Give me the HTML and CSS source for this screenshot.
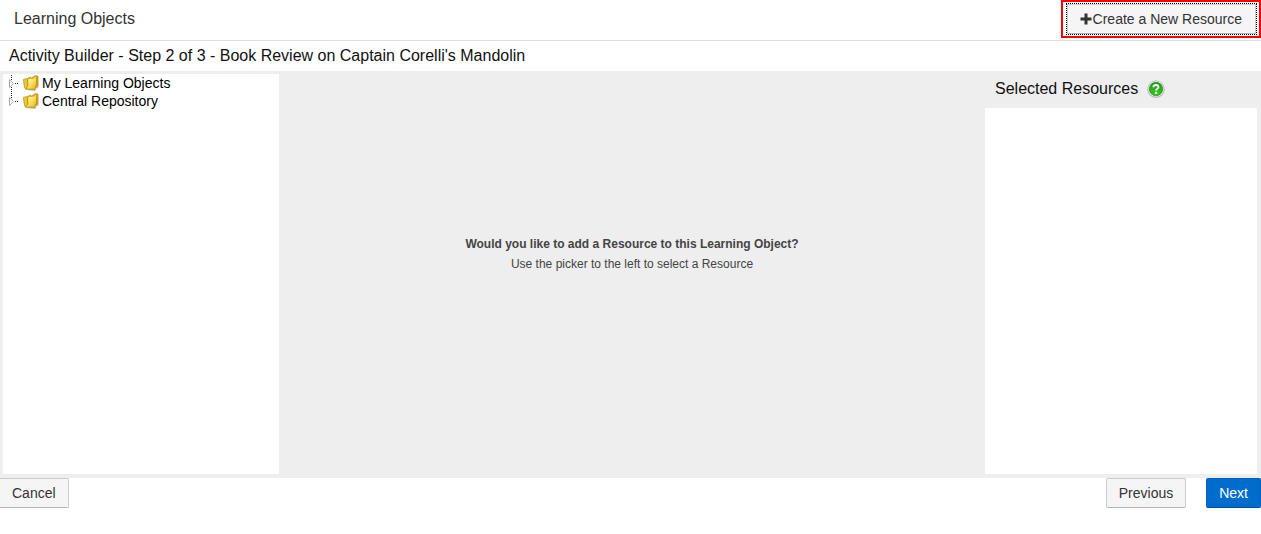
FILE: index.html
```
<!DOCTYPE html>
<html lang="en">
<head>
  <meta charset="UTF-8" />
  <meta name="viewport" content="width=device-width, initial-scale=1.0"/>
  <title>Learning Objects</title>
  <link rel="stylesheet" href="styles.css">
</head>
<body>
  <!-- Shared icons -->
  <svg class="icon-defs" width="0" height="0" aria-hidden="true">
    <defs>
      <linearGradient id="folderFront" x1="0" y1="0" x2="1" y2="1">
        <stop offset="0" stop-color="#fffbc0"/>
        <stop offset="0.5" stop-color="#fbe468"/>
        <stop offset="1" stop-color="#e3b420"/>
      </linearGradient>
      <linearGradient id="helpGreen" x1="0" y1="0" x2="0" y2="1">
        <stop offset="0" stop-color="#1c9a14"/>
        <stop offset="1" stop-color="#35cc1c"/>
      </linearGradient>
      <symbol id="expander" viewBox="0 0 14 18">
        <path d="M9 9.500H10M11 9.500H12" stroke="#222"/>
        <path d="M3.500 5.500V13.500L7.500 9.500Z" fill="#fff" stroke="#aaa"/>
      </symbol>
      <symbol id="folder" viewBox="0 0 16 16">
        <path d="M2 15L12 16L15.500 12.500V3L14 14Z" fill="#888" opacity="0.500"/>
        <path d="M0.400 4.500L3.500 3.500L5 4.500V11L2.600 14L1.500 12.500Z" fill="#efc63c" stroke="#b58a14" stroke-width="0.700"/>
        <path d="M4.800 3.200L7.500 2.200L8.700 3L12.500 0.500L15 1.200L14.700 11L11.500 14.600L2.600 14.200L4.800 11Z" fill="#e0ae1c" stroke="#a67d0c" stroke-width="0.600"/>
        <path d="M5.200 4L10.800 3.800L13.300 1.800L13 10.500L10.800 13.500L3.600 13.400L5.400 10.800Z" fill="url(#folderFront)"/>
        <path d="M13.300 1.800L14.400 1.600L14.200 10.800L11.300 13.900L13 10.500Z" fill="#c8940e"/>
      </symbol>
    </defs>
  </svg>

  <header class="page-header">
    <h1>Learning Objects</h1>
    <div class="create-highlight">
      <button type="button" class="btn btn-create">
        <svg class="plus-icon" width="13" height="12" viewBox="0 0 13 12" aria-hidden="true">
          <path d="M4.500 0.500H7.500V4.500H11.500V7.500H7.500V11.500H4.500V7.500H0.500V4.500H4.500Z" fill="#333"/>
        </svg>Create a New Resource
      </button>
    </div>
  </header>

  <h2 class="step-title">Activity Builder - Step 2 of 3 - Book Review on Captain Corelli's Mandolin</h2>

  <main class="builder">
    <nav class="picker">
      <ul class="tree">
        <li>
          <svg class="expander" aria-hidden="true"><path d="M5.500 1V18" stroke="#222" stroke-dasharray="1 1"/><use href="#expander"/></svg>
          <svg class="folder" aria-hidden="true"><use href="#folder"/></svg>
          <a href="#my-learning-objects">My Learning Objects</a>
        </li>
        <li>
          <svg class="expander" aria-hidden="true"><path d="M5.500 1V6" stroke="#222" stroke-dasharray="1 1"/><use href="#expander"/></svg>
          <svg class="folder" aria-hidden="true"><use href="#folder"/></svg>
          <a href="#central-repository">Central Repository</a>
        </li>
      </ul>
    </nav>

    <section class="message">
      <p><strong>Would you like to add a Resource to this Learning Object?</strong></p>
      <p>Use the picker to the left to select a Resource</p>
    </section>

    <aside class="selected">
      <div class="selected-header">
        <h3>Selected Resources</h3>
        <a href="#help" class="help" aria-label="Help">
          <svg width="18" height="18" viewBox="0 0 18 18" aria-hidden="true">
            <circle cx="9" cy="9.500" r="8.400" fill="#888" opacity="0.500"/>
            <circle cx="9" cy="9" r="8.200" fill="#f0f0f0" stroke="#b4b4b4" stroke-width="0.800"/>
            <circle cx="9" cy="9" r="6.700" fill="url(#helpGreen)" stroke="#17820f" stroke-width="0.600"/>
            <path d="M6.500 7.200C6.500 4.300 11.500 4.300 11.500 7.100C11.500 8.900 9.100 8.700 9.100 10.500" fill="none" stroke="#fff" stroke-width="1.900"/>
            <circle cx="9.100" cy="12.800" r="1.200" fill="#fff"/>
          </svg>
        </a>
      </div>
      <div class="selected-list"></div>
    </aside>
  </main>

  <footer class="actions">
    <button type="button" class="btn btn-cancel">Cancel</button>
    <div class="actions-right">
      <button type="button" class="btn">Previous</button>
      <button type="button" class="btn btn-primary">Next</button>
    </div>
  </footer>
</body>
</html>
```
FILE: styles.css
```
* {
  box-sizing: border-box;
}

body {
  margin: 0;
  background-color: #fff;
  color: #111;
  font-family: "Liberation Sans", Arial, sans-serif;
  font-size: 14px;
}

h1, h2, h3, p, ul {
  margin: 0;
  padding: 0;
}

h1, h2, h3 {
  font-size: 16px;
  font-weight: normal;
  line-height: 20px;
}

.icon-defs {
  position: absolute;
}

/* Header */
.page-header {
  display: flex;
  justify-content: space-between;
  align-items: flex-start;
  height: 41px;
  border-bottom: 1px solid #ddd;
}

.page-header h1 {
  padding: 9px 14px;
  color: #333;
}

.create-highlight {
  padding: 2px 3px 2px 4px;
  border: 2px solid #f00;
}

.step-title {
  padding: 5px 9px;
}

/* Buttons */
.btn {
  height: 30px;
  padding: 0 12px;
  border: 1px solid #ccc;
  border-bottom-color: #b3b3b3;
  border-radius: 2px;
  background-color: #f5f5f5;
  color: #333;
  font-family: inherit;
  font-size: 14px;
  line-height: 20px;
  cursor: pointer;
}

.btn:hover {
  background-color: #e8e8e8;
}

.btn-create {
  display: flex;
  align-items: center;
  padding: 0 13px 0 12px;
  border-radius: 0;
  outline: 1px dotted #000;
}

.btn-cancel {
  border-left: none;
  border-radius: 0 2px 2px 0;
}

.btn-primary {
  border-color: #0060c0;
  border-bottom-color: #004f9e;
  background-color: #006dcc;
  color: #fff;
}

.btn-primary:hover {
  background-color: #005bb0;
}

/* Builder columns */
.builder {
  display: grid;
  grid-template-columns: 276px 1fr 272px;
  min-height: 407px;
  padding: 3px 4px 4px 3px;
  background-color: #eee;
}

.picker {
  background-color: #fff;
}

.tree {
  list-style: none;
}

.tree li {
  display: flex;
  align-items: center;
  height: 18px;
  padding-left: 3px;
}

.tree a {
  margin-left: 3px;
  color: #000;
  line-height: 18px;
  text-decoration: none;
}

.expander {
  width: 14px;
  height: 18px;
  margin-right: 3px;
}

.folder {
  width: 16px;
  height: 16px;
}

.message {
  padding-top: 160px;
  color: #444;
  font-size: 12px;
  line-height: 20px;
  text-align: center;
}

.selected {
  display: flex;
  flex-direction: column;
}

.selected-header {
  display: flex;
  gap: 9px;
  height: 34px;
  padding: 5px 10px;
}

.help {
  height: 18px;
  margin-top: 1px;
}

.help svg {
  display: block;
}

.selected-list {
  flex: 1;
  background-color: #fff;
}

/* Footer */
.actions {
  display: flex;
  justify-content: space-between;
}

.actions-right {
  display: flex;
  gap: 20px;
}
```
